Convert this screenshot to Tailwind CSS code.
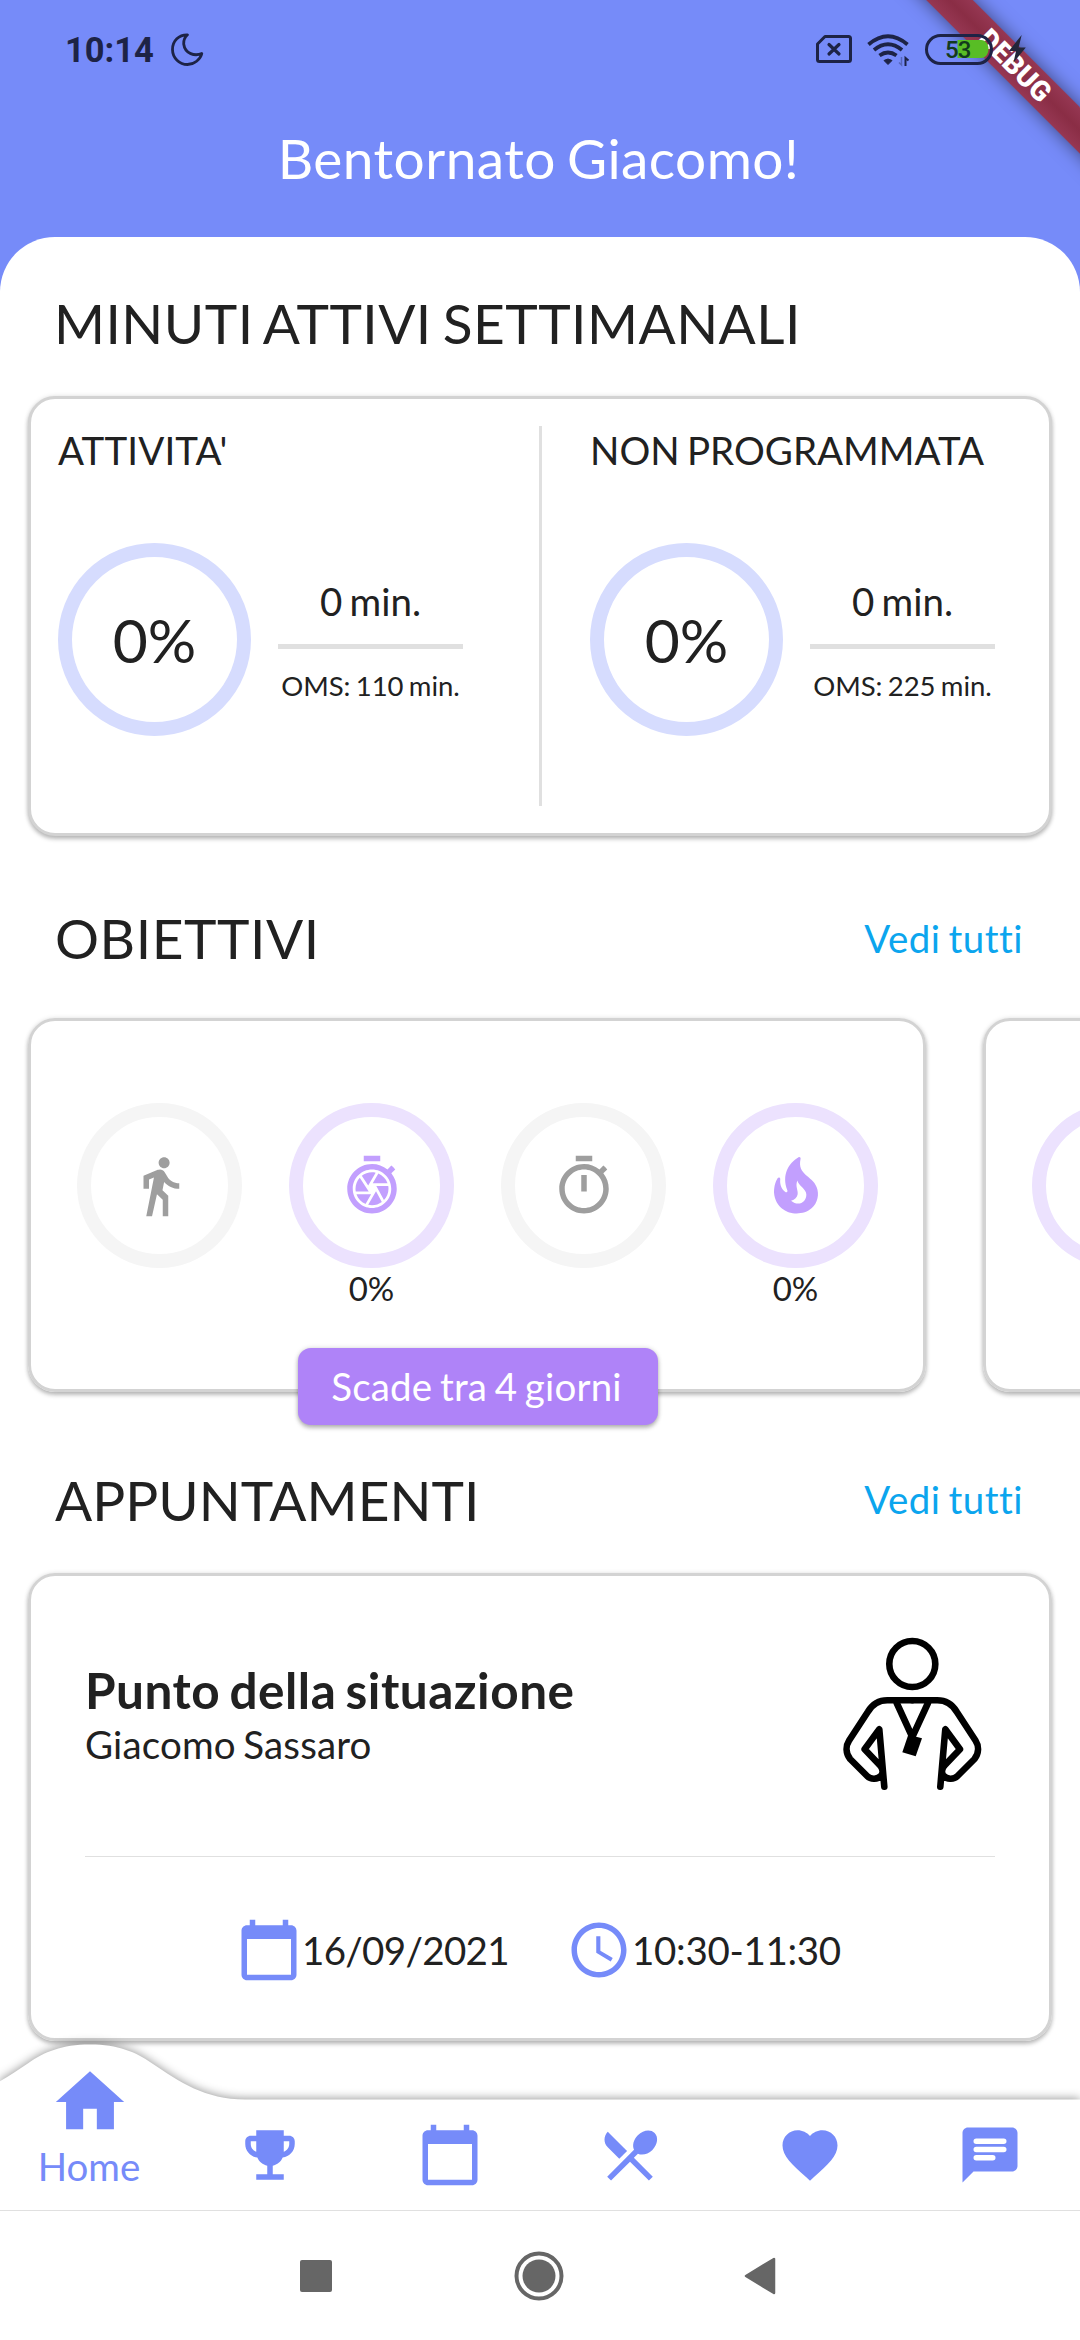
<!DOCTYPE html>
<html lang="it">
<head>
<meta charset="utf-8">
<title>Home</title>
<script src="https://cdn.jsdelivr.net/npm/@tailwindcss/browser@4"></script>
</head>
<body class="w-[1080px] h-[2340px] overflow-hidden bg-[#768bf9]">
<div class="relative flex h-[2340px] w-[1080px] flex-col overflow-hidden font-['Lato',sans-serif] text-[38.5px] leading-[46px] text-[#212121] [font-variant-ligatures:none] [word-spacing:-2.5px]">

  <header class="h-[237px] shrink-0 pt-[125px] pr-[3px] text-center text-[55px] leading-[66px] tracking-[0.45px] text-white [word-spacing:-3.5px]">Bentornato Giacomo!</header>

  <main class="h-[1863px] shrink-0 rounded-t-[55px] bg-white">
    <h1 class="h-[159px] pt-[53px] pl-[54px] text-[55px] leading-[66px] tracking-[0.45px] [word-spacing:-3.5px]">MINUTI ATTIVI SETTIMANALI</h1>

    <section class="mx-[28px] flex h-[440px] rounded-[27px] border-3 border-[#d3d3d3] bg-white py-[27px] shadow-[0_3px_4px_rgba(0,0,0,0.25),0_0_5px_rgba(0,0,0,0.1)]">
      <div class="w-[508px] pt-px pl-[27px]">
        <h2 class="tracking-[0.15px]">ATTIVITA'</h2>
        <div class="mt-[70px] flex items-center">
          <div class="flex size-[193px] items-center justify-center rounded-full border-14 border-[#d6dcfe] pt-px text-[60.5px] leading-[72px]">0%</div>
          <div class="ml-[27px] flex w-[185px] flex-col items-center">
            <span>0 min.</span>
            <div class="my-[20px] h-[5px] w-full bg-[#e0e0e0]"></div>
            <span class="text-[27.5px] leading-[33px] whitespace-nowrap [word-spacing:-1.8px]">OMS: 110 min.</span>
          </div>
        </div>
      </div>
      <div class="w-[3px] bg-[#e0e0e0]"></div>
      <div class="pt-px pl-[48px]">
        <h2 class="whitespace-nowrap">NON PROGRAMMATA</h2>
        <div class="mt-[70px] flex items-center">
          <div class="flex size-[193px] items-center justify-center rounded-full border-14 border-[#d6dcfe] pt-px text-[60.5px] leading-[72px]">0%</div>
          <div class="ml-[27px] flex w-[185px] flex-col items-center">
            <span>0 min.</span>
            <div class="my-[20px] h-[5px] w-full bg-[#e0e0e0]"></div>
            <span class="text-[27.5px] leading-[33px] whitespace-nowrap [word-spacing:-1.8px]">OMS: 225 min.</span>
          </div>
        </div>
      </div>
    </section>

    <div class="flex h-[182px] items-start justify-between pt-[69px] pr-[57px] pl-[55px]">
      <h1 class="text-[55px] leading-[66px] tracking-[0.55px]">OBIETTIVI</h1>
      <a class="pt-[10px] tracking-[0.5px] text-[#0ba5ee]">Vedi tutti</a>
    </div>

    <section class="flex gap-[57px] pl-[28px]">
      <div class="relative flex h-[374px] w-[898px] shrink-0 gap-[47px] rounded-[27px] border-3 border-[#d3d3d3] pt-[82px] pl-[46px] shadow-[0_3px_4px_rgba(0,0,0,0.25),0_0_5px_rgba(0,0,0,0.1)]">
        <div class="flex w-[165px] flex-col items-center">
          <div class="flex size-[165px] items-center justify-center rounded-full border-14 border-[#f5f5f5]">
            <svg class="size-[66px]" viewBox="0 0 24 24" fill="#9e9e9e"><path d="M13.5 5.5c1.1 0 2-.9 2-2s-.9-2-2-2-2 .9-2 2 .9 2 2 2zM9.8 8.9L7 23h2.1l1.8-8 2.1 2v6h2v-7.5l-2.1-2 .6-3C14.8 12 16.8 13 19 13v-2c-1.9 0-3.5-1-4.3-2.4l-1-1.6c-.4-.6-1-1-1.7-1-.3 0-.5.1-.8.1L6 8.3V13h2V9.6l1.8-.7"/></svg>
          </div>
        </div>
        <div class="flex w-[165px] flex-col items-center">
          <div class="flex size-[165px] items-center justify-center rounded-full border-14 border-[#ece2fe]">
            <svg class="size-[66px]" viewBox="0 0 24 24" fill="#c29ffe"><path d="M15 1H9v2h6V1zm4.03 6.39l1.42-1.42c-.43-.51-.9-.99-1.41-1.41l-1.42 1.42C16.07 4.74 14.12 4 12 4c-4.97 0-9 4.03-9 9s4.02 9 9 9 9-4.03 9-9c0-2.12-.74-4.07-1.97-5.61zM12 20c-3.87 0-7-3.13-7-7s3.13-7 7-7 7 3.13 7 7-3.13 7-7 7zm-.32-5H6.35c.57 1.62 1.82 2.92 3.41 3.56l-.11-.06 2.03-3.5zm5.97-4c-.57-1.6-1.78-2.89-3.34-3.54L12.26 11h5.39zm-7.04 7.83c.45.11.91.17 1.39.17 1.34 0 2.57-.45 3.57-1.19l-2.11-3.9-2.85 4.92zM7.55 8.99C6.59 10.05 6 11.46 6 13c0 .34.04.67.09 1h4.72L7.55 8.99zm8.79 8.14C17.37 16.06 18 14.6 18 13c0-.34-.04-.67-.09-1h-4.34l2.77 5.13zm-3.01-9.98C12.9 7.05 12.46 7 12 7c-1.4 0-2.69.49-3.71 1.29l2.32 3.56 2.72-4.7z"/></svg>
          </div>
          <span class="text-[33px] leading-[40px]">0%</span>
        </div>
        <div class="flex w-[165px] flex-col items-center">
          <div class="flex size-[165px] items-center justify-center rounded-full border-14 border-[#f5f5f5]">
            <svg class="size-[66px]" viewBox="0 0 24 24" fill="#9e9e9e"><path d="M15 1H9v2h6V1zm-4 13h2V8h-2v6zm8.03-6.61l1.42-1.42c-.43-.51-.9-.99-1.41-1.41l-1.42 1.42C16.07 4.74 14.12 4 12 4c-4.97 0-9 4.03-9 9s4.02 9 9 9 9-4.03 9-9c0-2.12-.74-4.07-1.97-5.61zM12 20c-3.87 0-7-3.13-7-7s3.13-7 7-7 7 3.13 7 7-3.13 7-7 7z"/></svg>
          </div>
        </div>
        <div class="flex w-[165px] flex-col items-center">
          <div class="flex size-[165px] items-center justify-center rounded-full border-14 border-[#ece2fe]">
            <svg class="size-[66px]" viewBox="0 0 24 24" fill="#c29ffe"><path d="M19.48,12.35c-1.57-4.08-7.16-4.3-5.81-10.23c0.1-0.44-0.37-0.78-0.75-0.55C9.29,3.71,6.68,8,8.87,13.62c0.18,0.46-0.36,0.89-0.75,0.59c-1.81-1.37-2-3.34-1.84-4.75c0.06-0.52-0.62-0.77-0.91-0.34C4.69,10.16,4,11.84,4,14.37c0.38,5.6,5.11,7.32,6.81,7.54c2.43,0.31,5.06-0.14,6.95-1.87C19.84,18.11,20.6,15.03,19.48,12.35z M10.2,17.38c1.44-0.35,2.18-1.39,2.38-2.31c0.33-1.43-0.96-2.83-0.09-5.09c0.33,1.87,3.27,3.04,3.27,5.08C15.84,17.59,13.1,19.76,10.2,17.38z"/></svg>
          </div>
          <span class="text-[33px] leading-[40px]">0%</span>
        </div>
        <div class="absolute bottom-[-36px] left-[267px] flex h-[77px] w-[360px] items-center justify-center rounded-[13px] bg-[#af83f8] pr-[3px] pb-[2px] tracking-[0.2px] text-white shadow-[0_3px_4px_rgba(0,0,0,0.25),0_0_5px_rgba(0,0,0,0.15)]">Scade tra 4 giorni</div>
      </div>
      <div class="h-[374px] w-[898px] shrink-0 rounded-[27px] border-3 border-[#d3d3d3] pt-[82px] pl-[46px] shadow-[0_3px_4px_rgba(0,0,0,0.25),0_0_5px_rgba(0,0,0,0.1)]">
        <div class="size-[165px] rounded-full border-14 border-[#ece2fe]"></div>
      </div>
    </section>

    <div class="flex h-[181px] items-start justify-between pt-[75px] pr-[57px] pl-[55px]">
      <h1 class="text-[55px] leading-[66px]">APPUNTAMENTI</h1>
      <a class="pt-[9px] tracking-[0.5px] text-[#0ba5ee]">Vedi tutti</a>
    </div>

    <section class="mx-[28px] h-[468px] rounded-[27px] border-3 border-[#d3d3d3] px-[54px] pt-[55px] shadow-[0_3px_4px_rgba(0,0,0,0.25),0_0_5px_rgba(0,0,0,0.1)]">
      <div class="flex items-center justify-between">
        <div>
          <h3 class="-mt-px mb-px text-[49.5px] leading-[60px] font-bold tracking-[0.5px] [word-spacing:-3.2px]">Punto della situazione</h3>
          <p class="tracking-[0.15px]">Giacomo Sassaro</p>
        </div>
        <svg class="size-[165px]" viewBox="0 0 165 165" fill="none" stroke="#000" stroke-width="6.6" stroke-linecap="round" stroke-linejoin="round">
          <circle cx="82.3" cy="33" r="23"/>
          <path d="M82.3 69.3H107.3C115.5 69.3 122 73 126.7 80.7L145.5 109.5C149 115 149 122 144.500 128L127.500 145C123.500 149 117 148.500 113.300 144.500C111 141 112 137 115 134L130 118.300L115.300 98.300L110.300 155.700"/>
          <path d="M82.300 69.300H57.300C49.100 69.300 42.600 73 37.900 80.700L19.100 109.500C15.600 115 15.600 122 20.100 128L37.100 145C41.100 149 47.600 148.500 51.300 144.500C53.600 141 52.600 137 49.600 134L34.600 118.300L49.300 98.300L54.300 155.700"/>
          <path d="M66.700 72L82.300 106L98 72"/>
          <path d="M78.300 103.700L92 107.300L85.700 125.300L72.300 121.300Z" fill="#000" stroke="none"/>
        </svg>
      </div>
      <div class="mt-[60px] h-px bg-[#e0e0e0]"></div>
      <div class="mt-[60px] flex gap-[58px] pl-[151px]">
        <div class="flex w-[272px] items-center">
          <svg class="size-[66px] shrink-0" viewBox="0 0 24 24" fill="#768bf9"><path d="M20 3h-1V1h-2v2H7V1H5v2H4c-1.100 0-2 .9-2 2v16c0 1.100.9 2 2 2h16c1.100 0 2-.9 2-2V5c0-1.100-.9-2-2-2zm0 18H4V8h16v13z"/></svg>
          <span class="tracking-[-0.65px]">16/09/2021</span>
        </div>
        <div class="flex items-center">
          <svg class="size-[66px] shrink-0" viewBox="0 0 24 24" fill="#768bf9"><path d="M11.990 2C6.470 2 2 6.480 2 12s4.470 10 9.990 10C17.520 22 22 17.520 22 12S17.520 2 11.990 2zM12 20c-4.420 0-8-3.580-8-8s3.580-8 8-8 8 3.580 8 8-3.580 8-8 8zm.5-13H11v6l5.250 3.150.75-1.230-4.500-2.670z"/></svg>
          <span class="tracking-[-0.3px]">10:30-11:30</span>
        </div>
      </div>
    </section>
  </main>

  <nav class="relative h-[110px] shrink-0 bg-white">
    <svg class="absolute -top-[80px] left-0 h-[190px] w-[1080px] drop-shadow-[0_-1px_5px_rgba(0,0,0,0.4)]" viewBox="0 0 1080 190"><path d="M-65 79.500C-25 79.500 0 62 28.500 43C44 32 62 24.500 90 24.500C118 24.500 136 32 151.500 43C180 62 205 79.500 245 79.500H1080V190H-65Z" fill="#fff"/></svg>
    <div class="absolute inset-0 grid grid-cols-6 justify-items-center text-[#768bf9]">
      <div class="-mt-[39px] flex flex-col items-center">
        <svg class="size-[82px]" viewBox="0 0 24 24" fill="currentColor"><path d="M10 20v-6h4v6h5v-8h3L12 3 2 12h3v8z"/></svg>
        <span class="pr-[2px]">Home</span>
      </div>
      <svg class="mt-[22px] size-[66px]" viewBox="0 0 24 24" fill="currentColor"><path d="M19 5h-2V3H7v2H5c-1.100 0-2 .9-2 2v1c0 2.550 1.920 4.630 4.390 4.940.63 1.500 1.980 2.630 3.610 2.960V19H7v2h10v-2h-4v-3.100c1.630-.33 2.980-1.460 3.610-2.960C19.080 12.630 21 10.550 21 8V7c0-1.100-.9-2-2-2zM5 8V7h2v3.820C5.840 10.400 5 9.300 5 8zm14 0c0 1.300-.84 2.400-2 2.820V7h2v1z"/></svg>
      <svg class="mt-[22px] size-[66px]" viewBox="0 0 24 24" fill="currentColor"><path d="M20 3h-1V1h-2v2H7V1H5v2H4c-1.100 0-2 .9-2 2v16c0 1.100.9 2 2 2h16c1.100 0 2-.9 2-2V5c0-1.100-.9-2-2-2zm0 18H4V8h16v13z"/></svg>
      <svg class="mt-[22px] size-[66px]" viewBox="0 0 24 24" fill="currentColor"><path d="M8.100 13.340l2.830-2.830L3.910 3.500c-1.560 1.560-1.560 4.090 0 5.660l4.190 4.180zm6.780-1.810c1.530.71 3.680.21 5.270-1.380 1.910-1.910 2.280-4.650.81-6.120-1.460-1.460-4.200-1.100-6.120.81-1.590 1.590-2.090 3.740-1.380 5.270L3.700 19.870l1.410 1.410L12 14.410l6.880 6.880 1.410-1.410L13.410 13l1.470-1.470z"/></svg>
      <svg class="mt-[22px] size-[66px]" viewBox="0 0 24 24" fill="currentColor"><path d="M12 21.350l-1.450-1.320C5.400 15.360 2 12.280 2 8.500 2 5.420 4.420 3 7.500 3c1.740 0 3.410.81 4.500 2.090C13.090 3.810 14.760 3 16.500 3 19.580 3 22 5.420 22 8.500c0 3.780-3.400 6.860-8.550 11.540L12 21.350z"/></svg>
      <svg class="mt-[22px] size-[66px]" viewBox="0 0 24 24" fill="currentColor"><path d="M20 2H4c-1.100 0-2 .9-2 2v18l4-4h14c1.100 0 2-.9 2-2V4c0-1.100-.9-2-2-2z"/><path d="M7 7h10M7 10h10M7 13h6" stroke="#fff" stroke-width="2" stroke-linecap="round"/></svg>
    </div>
  </nav>

  <!-- Android navigation bar -->
  <div class="relative flex h-[130px] items-center gap-[182px] border-t border-[#e0e0e0] bg-white pl-[300px]">
    <div class="size-[32px] rounded-[2px] bg-[#666]"></div>
    <svg class="size-[50px]" viewBox="0 0 50 50"><circle cx="25" cy="25" r="22.500" fill="none" stroke="#666" stroke-width="4"/><circle cx="25" cy="25" r="16.500" fill="#666"/></svg>
    <svg class="-ml-[2px] h-[38px] w-[32px]" viewBox="0 0 32 38"><path d="M2 19L30 2V36Z" fill="#666" stroke="#666" stroke-width="2.500" stroke-linejoin="round"/></svg>
  </div>

  <!-- Debug ribbon over the top right corner -->
  <div class="absolute top-[49px] left-[815px] flex h-[33px] w-[400px] rotate-45 items-center justify-center bg-linear-to-b from-[#963753] via-[#8a2d45] to-[#963753] font-['Roboto',sans-serif] text-[28px] leading-[33px] font-black text-white shadow-[0_0_18px_rgba(0,0,0,0.5)]">DEBUG</div>

  <!-- Status bar -->
  <div class="absolute inset-x-0 top-0 flex h-[100px] items-center font-['Roboto',sans-serif] text-[#1d2346]">
    <span class="pl-[65px] text-[34.5px] font-bold whitespace-nowrap">10:14</span>
    <svg class="absolute top-[28px] left-[165px] size-[44px]" viewBox="0 0 44 44" fill="none" stroke="currentColor" stroke-width="2.800" stroke-linejoin="round"><path d="M22.500 6.800C14 6.500 7.500 13 7.500 21.500S14.500 36.500 22.500 36.500C29 36.500 35.500 31.500 36.800 25.500C30 28.500 20 26 18.700 16C18.400 12 20 9 22.500 6.800Z"/></svg>
    <svg class="absolute top-[28px] left-[810px] h-[44px] w-[220px]" viewBox="0 0 220 44" fill="none" stroke="currentColor">
      <path d="M15 8.500H38.500Q40.500 8.500 40.500 10.500V31.500Q40.500 33.500 38.500 33.500H9.500Q7.500 33.500 7.500 31.500V16Z" stroke-width="3" stroke-linejoin="round"/>
      <path d="M19 16.500L29 26M29 16.500L19 26" stroke-width="3.200" stroke-linecap="round"/>
      <path d="M58.500 16.500Q78 0 97.500 16.500M64 22Q78 10.500 92 22M69.500 27.500Q78 21.500 86.500 27.500" stroke-width="3.800"/>
      <path d="M74 32.500Q78 29.500 82 32.500L78 36.500Z" fill="currentColor" stroke-width="1"/>
      <path d="M95.500 38V30L98.500 32.500" stroke-width="2"/><path d="M91.500 29V37L89 34.500" stroke-width="1.500" opacity=".35"/>
      <path d="M147.500 12H171C181 12 181 30 171 30H147.500Z" fill="#58bd25" stroke="none"/>
      <rect x="116.500" y="7.500" width="65" height="28" rx="14" stroke-width="3"/>
      <path d="M208.500 7L196 23H203L200.500 34.500L212.500 19.500H205.500Z" fill="#22263a" stroke="none" transform="translate(-1 0) scale(1.020 1)"/>
    </svg>
    <span class="absolute top-[38px] left-[945px] text-[24px] leading-[24px] font-medium tracking-[-1px] text-[#123a1c]">53</span>
  </div>
</div>
</body>
</html>
